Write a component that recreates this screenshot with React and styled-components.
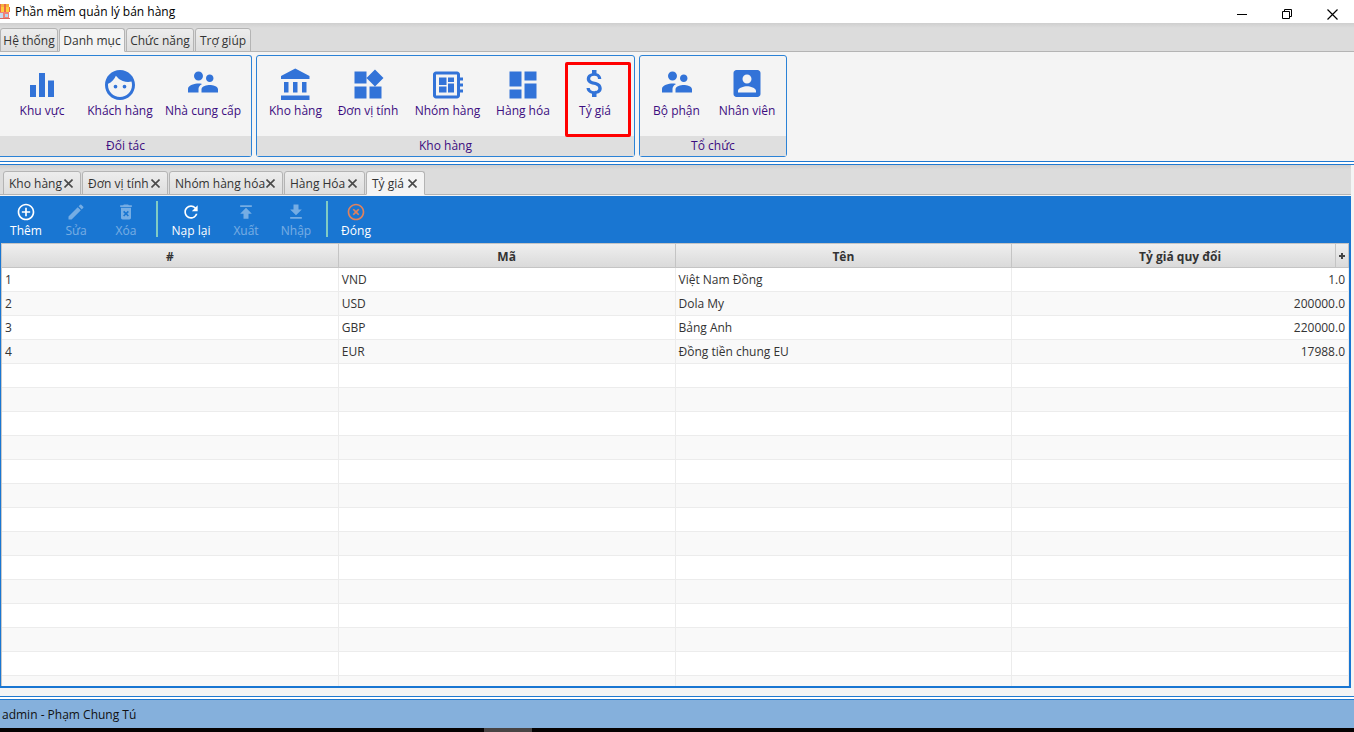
import React from "react";
import styled, { createGlobalStyle, css } from "styled-components";
import {
  MdEqualizer,
  MdFace,
  MdWidgets,
  MdDeveloperBoard,
  MdDashboard,
  MdControlPoint,
  MdEdit,
  MdDeleteForever,
  MdRefresh,
  MdHighlightOff,
} from "react-icons/md";

const GlobalStyle = createGlobalStyle`
  *, *::before, *::after { box-sizing: border-box; }
  body {
    margin: 0;
    background: #f4f4f4;
    color: #333;
    font-family: "Segoe UI", "Open Sans", "Noto Sans", sans-serif;
    font-size: 12px;
    line-height: 16px;
  }
  button { font: inherit; color: inherit; background: none; border: 0; padding: 0; white-space: nowrap; }
`;

const Shell = styled.div`
  display: flex;
  flex-direction: column;
  height: 100vh;
  overflow: hidden;
`;

/* Title bar */
const TitleBar = styled.header`
  display: flex;
  align-items: center;
  flex: none;
  height: 23px;
  background: #fff;
  color: #000;
`;
const Title = styled.h1`
  flex: 1;
  margin: 0 0 0 5px;
  padding-top: 1px;
  font-size: 12px;
  font-weight: 400;
`;
const WindowButton = styled.button`
  display: flex;
  align-items: center;
  justify-content: center;
  width: 45px;
  height: 23px;
  padding: 6px 0 0 2px;
`;

/* Ribbon tabs */
const TabStrip = styled.nav`
  display: flex;
  align-items: flex-end;
  flex: none;
  gap: ${(p) => p.$gap}px;
  height: ${(p) => p.$height}px;
  padding-left: ${(p) => p.$inset}px;
  background: linear-gradient(#cfcfcf, #dcdcdc 5px);
  box-shadow: inset 0 -1px #b4b4b4;
`;
const tabFace = css`
  height: 24px;
  border: 1px solid #b4b4b4;
  border-radius: 3px 3px 0 0;
  background: ${(p) => (p.$active ? "#f4f4f4" : "linear-gradient(#ededed, #dedede)")};
  ${(p) => p.$active && "border-bottom-color: #f4f4f4;"}
`;
const RibbonTab = styled.button`
  ${tabFace}
  width: ${(p) => p.$width}px;
  padding-top: 2px;
  text-align: center;
`;

/* Ribbon */
const Ribbon = styled.section`
  display: flex;
  flex: none;
  gap: 4px;
  height: 109px;
  padding-top: 3px;
  background: #f4f4f4;
`;
const Group = styled.div`
  display: flex;
  flex-direction: column;
  width: ${(p) => p.$width}px;
  height: 102px;
  border: 1px solid #2b82d6;
  border-left-width: ${(p) => (p.$flush ? 0 : 1)}px;
  border-radius: ${(p) => (p.$flush ? "0 3px 3px 0" : "3px")};
`;
const GroupItems = styled.div`
  display: flex;
  flex: 1;
  padding-left: 3px;
`;
const GroupName = styled.div`
  height: 20px;
  padding-top: 2px;
  text-align: center;
  background: #dfdfdf;
  color: #3c0d80;
`;
const RibbonButton = styled.button`
  position: relative;
  display: flex;
  flex-direction: column;
  flex: none;
  align-items: center;
  width: ${(p) => p.$width}px;
  padding-top: 11px;
  color: #3c0d80;
  svg { flex: none; width: 36px; height: 36px; color: #3273d8; fill: currentColor; }
`;
const Highlight = styled.span`
  position: absolute;
  inset: 6px auto auto 9px;
  width: 66px;
  height: 75px;
  border: 3px solid #f00;
  border-radius: 2px;
`;
const DoubleRule = styled.div`
  flex: none;
  height: 4px;
  border: solid #2079d0;
  border-width: 1px 0;
  background: #fff;
`;

/* Document tabs */
const Workspace = styled.main`
  display: flex;
  flex-direction: column;
  flex: 1;
  min-height: 0;
  margin-right: 3px;
`;
const DocTab = styled.div`
  ${tabFace}
  display: flex;
  align-items: center;
  justify-content: space-between;
  width: ${(p) => p.$width}px;
  padding: 1px 7px 0 5px;
  white-space: nowrap;
`;
const CloseButton = styled.button`
  display: flex;
  svg { width: 9px; height: 9px; stroke: #4a4a4a; stroke-width: 1.6; }
`;

/* Toolbar */
const Toolbar = styled.div`
  display: flex;
  align-items: flex-start;
  flex: none;
  height: 48px;
  padding: 5px 0 0 1px;
  border-top: 1px solid #f4f4f4;
  background: #1976d2;
  color: #fff;
`;
const ToolButton = styled.button`
  display: flex;
  flex-direction: column;
  align-items: center;
  gap: 1px;
  width: ${(p) => p.$width || 50}px;
  padding-top: 1px;
  opacity: ${(p) => (p.disabled ? 0.4 : 1)};
  color: #fff;
  svg { flex: none; width: 20px; height: 20px; fill: currentColor; color: ${(p) => p.$tint || "#fff"}; }
`;
const ToolDivider = styled.span`
  width: 2px;
  height: 36px;
  margin: 0 3px 0 5px;
  background: #80cbc4;
`;

/* Data table */
const TableFrame = styled.div`
  position: relative;
  flex: 1;
  min-height: 0;
  overflow: hidden;
  padding-left: 1px;
  border: solid #1976d2;
  border-width: 0 2px 2px 1px;
  background: #fff;
  box-shadow: inset 1px -1px #c8c8c8;
`;
const Table = styled.table`
  width: 100%;
  border-collapse: separate;
  border-spacing: 0;
  table-layout: fixed;
`;
const HeadCell = styled.th`
  height: 25px;
  padding: 2px 0 0;
  border: solid #c4c4c4;
  border-width: 1px 1px 1px 0;
  background: linear-gradient(#efefef, #dadada);
  font-weight: 700;
`;
const Row = styled.tr`
  background: ${(p) => (p.$odd ? "#f9f9f9" : "#fff")};
`;
const Cell = styled.td`
  height: 24px;
  padding: 0 3px;
  border: solid #ececec;
  border-width: 0 1px 1px 0;
  text-align: ${(p) => (p.$right ? "right" : "left")};
`;
const ColumnMenu = styled.button`
  position: absolute;
  top: 1px;
  right: 0;
  display: flex;
  align-items: center;
  justify-content: center;
  width: 14px;
  height: 23px;
  border: solid #c4c4c4;
  border-width: 0 1px;
  background: linear-gradient(#efefef, #dadada);
`;

/* Footer */
const Gap = styled.div`
  flex: none;
  height: 8px;
`;
const StatusBar = styled.footer`
  flex: none;
  height: 28px;
  padding: 7px 2px 0;
  background: #85b0dc;
  color: #111;
`;
const Taskbar = styled.div`
  flex: none;
  height: 4px;
  background: #050202;
`;
const TaskbarItem = styled.div`
  width: 48px;
  height: 4px;
  margin-left: 484px;
  background: #484444;
`;

const ShopLogo = () => (
  <svg width="10" height="17" viewBox="0 0 10 17" aria-hidden="true">
    <path d="M0 1h9v3H0z" fill="#f3b23e" />
    <path d="M0 4h10v5H0z" fill="#ffcf3f" />
    <path d="M0 1h1v8H0zM4 1h2v8H4zM9 4h1v5H9z" fill="#ee6a45" />
    <path d="M0 9h9v7H0z" fill="#ef8378" />
    <path d="M0 10h3v6H0z" fill="#c5dcef" />
    <path d="M5 11h3v3H5z" fill="#b4d8f0" />
    <path d="M0 15h10v1H0z" fill="#d8665c" />
  </svg>
);
const People = () => (
  <svg viewBox="0 2 24 24">
    <path d="M16.5 12c1.38 0 2.49-1.12 2.49-2.5S17.88 7 16.5 7C15.12 7 14 8.12 14 9.500s1.120 2.500 2.500 2.500zM9 11c1.660 0 2.990-1.340 2.990-3S10.660 5 9 5C7.340 5 6 6.340 6 8s1.340 3 3 3zm7.500 3c-1.830 0-5.500.92-5.500 2.750V19h11v-2.250c0-1.830-3.670-2.750-5.500-2.750zM9 13c-2.330 0-7 1.170-7 3.500V19h7v-2.250c0-.85.33-2.340 2.370-3.470C10.500 13.100 9.660 13 9 13z" />
  </svg>
);
const Bank = () => (
  <svg viewBox="0 0 24 24">
    <path d="M4 10v7h3v-7H4zm6 0v7h3v-7h-3zM2 22h19v-3H2v3zm14-12v7h3v-7h-3zm-4.500-9L2 6v2h19V6l-9.500-5z" />
  </svg>
);
const Dollar = () => (
  <svg viewBox="0 1 24 24">
    <path d="M11.800 10.900c-2.270-.59-3-1.200-3-2.150 0-1.090 1.010-1.850 2.700-1.850 1.780 0 2.440.85 2.500 2.100h2.210c-.07-1.720-1.120-3.300-3.210-3.810V3h-3v2.160c-1.940.42-3.500 1.680-3.500 3.610 0 2.310 1.910 3.460 4.700 4.130 2.500.6 3 1.480 3 2.410 0 .69-.49 1.790-2.700 1.790-2.060 0-2.870-.92-2.980-2.100h-2.200c.12 2.190 1.760 3.420 3.680 3.830V21h3v-2.150c1.950-.37 3.500-1.500 3.500-3.550 0-2.840-2.430-3.810-4.700-4.400z" />
  </svg>
);
const Person = () => (
  <svg viewBox="0 1 24 24">
    <path d="M3 5v14c0 1.100.89 2 2 2h14c1.100 0 2-.9 2-2V5c0-1.100-.9-2-2-2H5c-1.110 0-2 .9-2 2zm12 4c0 1.660-1.340 3-3 3s-3-1.340-3-3 1.340-3 3-3 3 1.340 3 3zm-9 8c0-2 4-3.100 6-3.100s6 1.100 6 3.100v1H6v-1z" />
  </svg>
);
const Upload = () => (
  <svg viewBox="0 0 24 24"><path d="M5 4v2h14V4H5zm0 10h4v6h6v-6h4l-7-7-7 7z" /></svg>
);
const Download = () => (
  <svg viewBox="0 0 24 24"><path d="M19 9h-4V3H9v6H5l7 7 7-7zM5 18v2h14v-2H5z" /></svg>
);

const ribbonTabs = [
  { label: "Hệ thống", width: 58 },
  { label: "Danh mục", width: 66, active: true },
  { label: "Chức năng", width: 68 },
  { label: "Trợ giúp", width: 56 },
];
const groups = [
  {
    name: "Đối tác",
    width: 252,
    items: [
      { label: "Khu vực", Icon: MdEqualizer, width: 78 },
      { label: "Khách hàng", Icon: MdFace, width: 78 },
      { label: "Nhà cung cấp", Icon: People, width: 88 },
    ],
  },
  {
    name: "Kho hàng",
    width: 379,
    items: [
      { label: "Kho hàng", Icon: Bank, width: 71 },
      { label: "Đơn vị tính", Icon: MdWidgets, width: 74 },
      { label: "Nhóm hàng", Icon: MdDeveloperBoard, width: 85 },
      { label: "Hàng hóa", Icon: MdDashboard, width: 66 },
      { label: "Tỷ giá", Icon: Dollar, width: 78, marked: true },
    ],
  },
  {
    name: "Tổ chức",
    width: 148,
    items: [
      { label: "Bộ phận", Icon: People, width: 67 },
      { label: "Nhân viên", Icon: Person, width: 74 },
    ],
  },
];
const docTabs = [
  { label: "Kho hàng", width: 78 },
  { label: "Đơn vị tính", width: 86 },
  { label: "Nhóm hàng hóa", width: 114 },
  { label: "Hàng Hóa", width: 81 },
  { label: "Tỷ giá", width: 59, active: true },
];
const rates = [
  ["1", "VND", "Việt Nam Đồng", "1.0"],
  ["2", "USD", "Dola My", "200000.0"],
  ["3", "GBP", "Bảng Anh", "220000.0"],
  ["4", "EUR", "Đồng tiền chung EU", "17988.0"],
];
const rows = [...rates, ...Array.from({ length: 14 }, () => ["", "", "", ""])];

export default function App() {
  return (
    <>
      <GlobalStyle />
      <Shell>
        <TitleBar>
          <ShopLogo />
          <Title>Phần mềm quản lý bán hàng</Title>
          <WindowButton aria-label="Minimize">
            <svg width="11" height="11"><path d="M0 5.500h10" stroke="#000" /></svg>
          </WindowButton>
          <WindowButton aria-label="Restore">
            <svg width="11" height="11" fill="none" stroke="#000">
              <path d="M.5 2.500h7v7h-7zM2.500 2.500v-2h7v7h-2" />
            </svg>
          </WindowButton>
          <WindowButton aria-label="Close">
            <svg width="11" height="11"><path d="M.5.5l10 10M10.500.5l-10 10" stroke="#000" strokeWidth="1.200" /></svg>
          </WindowButton>
        </TitleBar>

        <TabStrip $height={29} $inset={0} $gap={1}>
          {ribbonTabs.map((t) => (
            <RibbonTab key={t.label} $width={t.width} $active={t.active}>{t.label}</RibbonTab>
          ))}
        </TabStrip>

        <Ribbon>
          {groups.map((g, i) => (
            <Group key={g.name} $width={g.width} $flush={i === 0}>
              <GroupItems>
                {g.items.map(({ label, Icon, width, marked }) => (
                  <RibbonButton key={label} $width={width}>
                    <Icon />
                    {label}
                    {marked && <Highlight />}
                  </RibbonButton>
                ))}
              </GroupItems>
              <GroupName>{g.name}</GroupName>
            </Group>
          ))}
        </Ribbon>
        <DoubleRule />

        <Workspace>
          <TabStrip $height={30} $inset={3} $gap={1}>
            {docTabs.map((t) => (
              <DocTab key={t.label} $width={t.width} $active={t.active}>
                {t.label}
                <CloseButton aria-label={`Đóng ${t.label}`}>
                  <svg viewBox="0 0 9 9"><path d="M.5.5l8 8M8.500.5l-8 8" /></svg>
                </CloseButton>
              </DocTab>
            ))}
          </TabStrip>
          <Toolbar>
            <ToolButton><MdControlPoint />Thêm</ToolButton>
            <ToolButton disabled><MdEdit />Sửa</ToolButton>
            <ToolButton disabled><MdDeleteForever />Xóa</ToolButton>
            <ToolDivider />
            <ToolButton $width={60}><MdRefresh />Nạp lại</ToolButton>
            <ToolButton disabled><Upload />Xuất</ToolButton>
            <ToolButton disabled><Download />Nhập</ToolButton>
            <ToolDivider />
            <ToolButton $tint="#e0825c"><MdHighlightOff />Đóng</ToolButton>
          </Toolbar>
          <TableFrame>
            <Table>
              <thead>
                <tr>
                  {["#", "Mã", "Tên", "Tỷ giá quy đổi"].map((h) => (
                    <HeadCell key={h} scope="col">{h}</HeadCell>
                  ))}
                </tr>
              </thead>
              <tbody>
                {rows.map((r, i) => (
                  <Row key={i} $odd={i % 2 === 1}>
                    {r.map((v, c) => (
                      <Cell key={c} $right={c === 3}>{v}</Cell>
                    ))}
                  </Row>
                ))}
              </tbody>
            </Table>
            <ColumnMenu aria-label="Columns">
              <svg width="6" height="6"><path d="M3 0v6M0 3h6" stroke="#444" strokeWidth="2" /></svg>
            </ColumnMenu>
          </TableFrame>
        </Workspace>

        <Gap />
        <DoubleRule />
        <StatusBar>admin - Phạm Chung Tú</StatusBar>
        <Taskbar><TaskbarItem /></Taskbar>
      </Shell>
    </>
  );
}
